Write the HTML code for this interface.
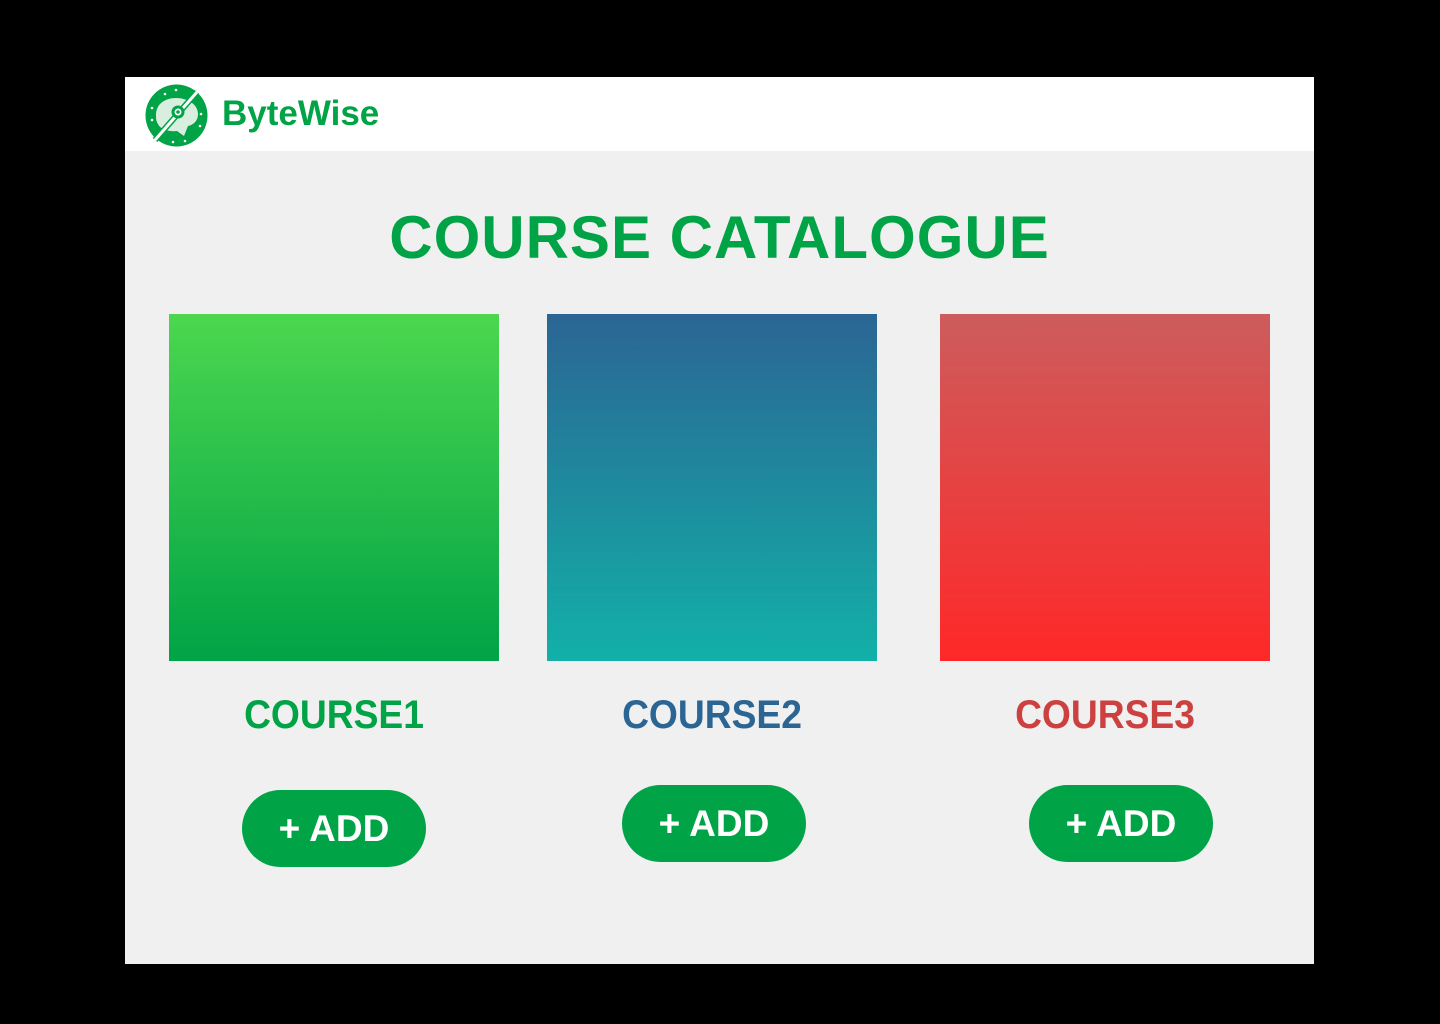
<!DOCTYPE html>
<html><head><meta charset="utf-8"><style>
*{margin:0;padding:0;box-sizing:border-box}
body{width:1440px;height:1024px;background:#000;position:relative;overflow:hidden;font-family:"Liberation Sans",sans-serif;font-weight:bold}
.page{position:absolute;left:125px;top:77px;width:1189px;height:887px;background:#f0f0f0}
.hdr{position:absolute;left:0;top:0;width:100%;height:74px;background:#fff}
.brand{position:absolute;left:97px;top:17px;font-size:35px;color:#00a346;letter-spacing:0px}
h1{position:absolute;left:0;width:100%;top:126px;text-align:center;font-size:60px;color:#00a346;letter-spacing:1px}
.box{position:absolute;top:237px;width:330px;height:347px}
.lbl{position:absolute;top:616px;width:330px;text-align:center;font-size:40px;transform:scaleX(0.93)}
.btn{position:absolute;width:184px;height:77px;border-radius:39px;background:#00a346;color:#fff;font-size:37px;text-align:center;line-height:77px}
</style></head><body>
<div class="page">
<div class="hdr">
<svg style="position:absolute;left:20px;top:7px" width="63" height="63" viewBox="0 0 63 63">
<circle cx="31.5" cy="31.5" r="31" fill="#00a346"/>
<path d="M11 31c0-11 9-17 20-17s22 6 22 16c0 7-5 11-10 12l-4 10-7-5c-9 1-17-2-19-7-2-3-2-6-2-9z" fill="#d8efdf"/>
<line x1="52" y1="8" x2="10" y2="56" stroke="#00a346" stroke-width="6"/>
<line x1="52" y1="8" x2="10" y2="56" stroke="#fff" stroke-width="3"/>
<circle cx="33" cy="28" r="6.5" fill="#00a346"/><circle cx="33" cy="28" r="3.5" fill="#fff"/><circle cx="33" cy="28" r="1.8" fill="#00a346"/>
<g fill="#fff"><circle cx="20" cy="10" r="1.3"/><circle cx="31" cy="6" r="1.3"/><circle cx="56" cy="30" r="1.3"/><circle cx="55" cy="42" r="1.3"/><circle cx="40" cy="57" r="1.3"/><circle cx="28" cy="58" r="1.3"/><circle cx="7" cy="36" r="1.3"/><circle cx="7" cy="24" r="1.3"/></g>
</svg>
<div class="brand">ByteWise</div>
</div>
<h1>COURSE CATALOGUE</h1>
<div class="box" style="left:44px;background:linear-gradient(#4cd74f,#00a346)"></div>
<div class="box" style="left:422px;background:linear-gradient(#2b6594,#12b0a8)"></div>
<div class="box" style="left:815px;background:linear-gradient(#cd5c5c,#ff2828)"></div>
<div class="lbl" style="left:44px;color:#00a346">COURSE1</div>
<div class="lbl" style="left:422px;color:#2b6594">COURSE2</div>
<div class="lbl" style="left:815px;color:#cd4040">COURSE3</div>
<div class="btn" style="left:117px;top:713px">+ ADD</div>
<div class="btn" style="left:497px;top:708px">+ ADD</div>
<div class="btn" style="left:904px;top:708px">+ ADD</div>
</div>
</body></html>
